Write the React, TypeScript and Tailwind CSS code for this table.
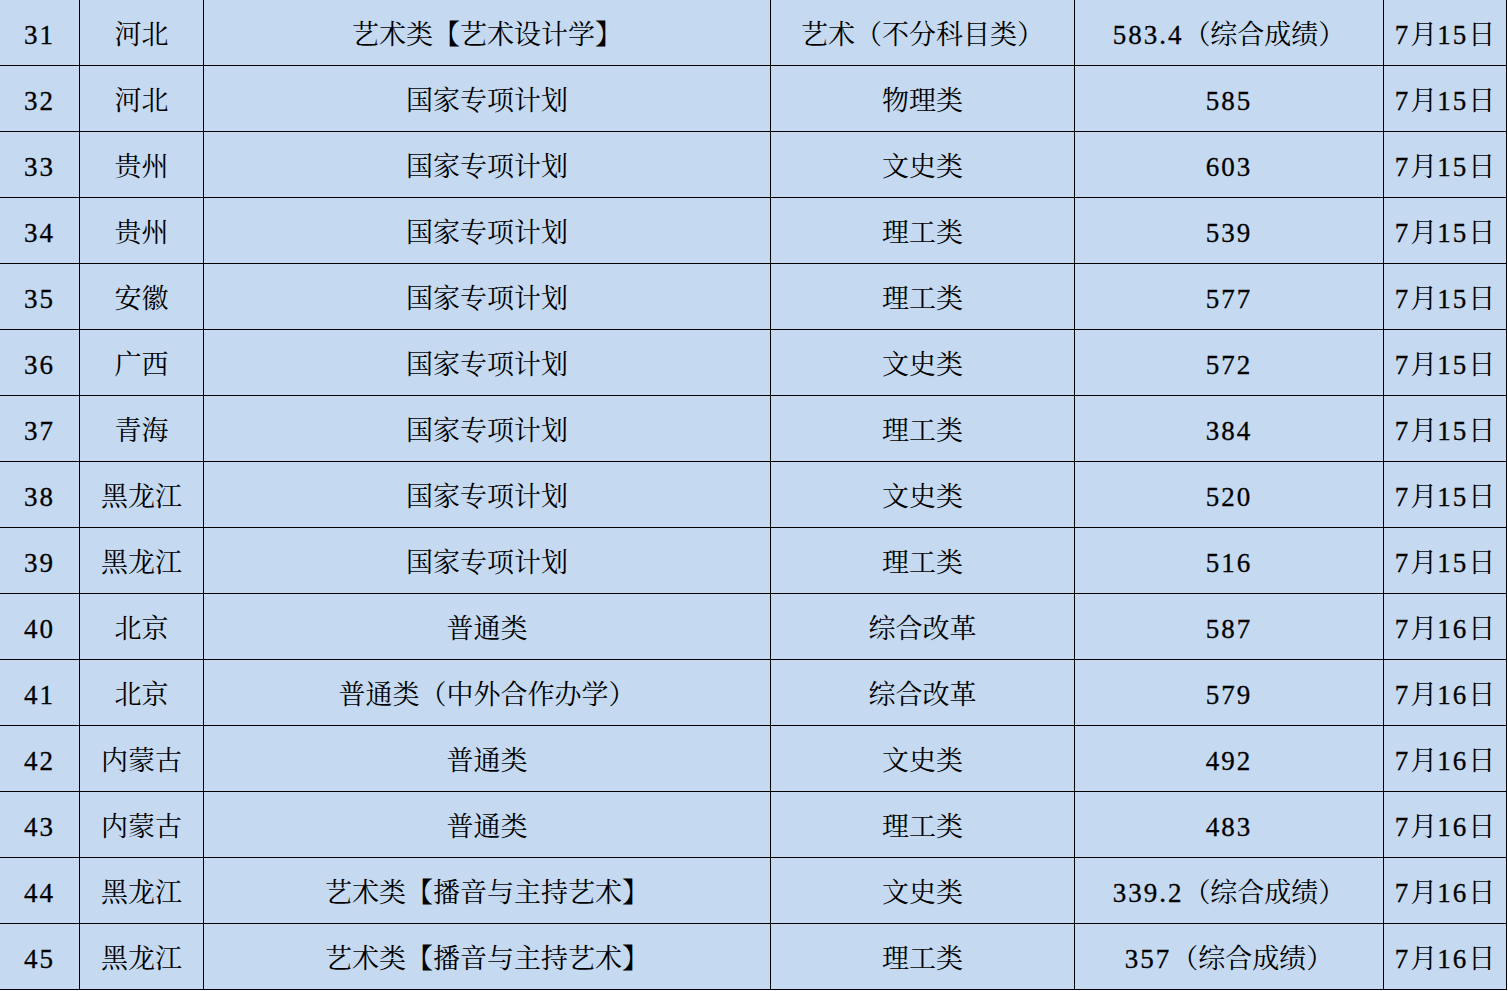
const rows: [string, string, string, string, string, string][] = [
  ["31", "河北", "艺术类【艺术设计学】", "艺术（不分科目类）", "583.4（综合成绩）", "7月15日"],
  ["32", "河北", "国家专项计划", "物理类", "585", "7月15日"],
  ["33", "贵州", "国家专项计划", "文史类", "603", "7月15日"],
  ["34", "贵州", "国家专项计划", "理工类", "539", "7月15日"],
  ["35", "安徽", "国家专项计划", "理工类", "577", "7月15日"],
  ["36", "广西", "国家专项计划", "文史类", "572", "7月15日"],
  ["37", "青海", "国家专项计划", "理工类", "384", "7月15日"],
  ["38", "黑龙江", "国家专项计划", "文史类", "520", "7月15日"],
  ["39", "黑龙江", "国家专项计划", "理工类", "516", "7月15日"],
  ["40", "北京", "普通类", "综合改革", "587", "7月16日"],
  ["41", "北京", "普通类（中外合作办学）", "综合改革", "579", "7月16日"],
  ["42", "内蒙古", "普通类", "文史类", "492", "7月16日"],
  ["43", "内蒙古", "普通类", "理工类", "483", "7月16日"],
  ["44", "黑龙江", "艺术类【播音与主持艺术】", "文史类", "339.2（综合成绩）", "7月16日"],
  ["45", "黑龙江", "艺术类【播音与主持艺术】", "理工类", "357（综合成绩）", "7月16日"],
];

const widths = ["w-[80px]", "w-[124px]", "w-[567px]", "w-[304px]", "w-[309px]", "w-[123px]"];

function Text({ value }: { value: string }) {
  // digits get a little extra spacing, like the half-width glyphs of the sheet font
  const parts = value.split(/([0-9.]+)/).filter((p) => p.length > 0);
  return (
    <span className="whitespace-nowrap">
      {parts.map((p, i) =>
        /^[0-9.]+$/.test(p) ? (
          <span
            key={i}
            className="font-['Liberation_Serif',serif] tracking-[2px] [-webkit-text-stroke:0.3px_#000]"
          >
            {p}
          </span>
        ) : (
          <span key={i}>{p}</span>
        ),
      )}
    </span>
  );
}

export default function App() {
  return (
    <div
      className="min-h-[991px] w-[1508px] bg-white text-[27px] text-black"
      style={{ fontFamily: '"Liberation Serif", "Noto Serif CJK SC", "Noto Sans CJK SC", serif' }}
    >
      <div className="flex w-[1507px] flex-col bg-[#c5d9f1]">
        {rows.map((row) => (
          <div key={row[0]} className="flex h-[66px]">
            {row.map((cell, i) => (
              <div
                key={i}
                className={`${widths[i]} flex shrink-0 items-center justify-center border-r border-b border-black pt-[5px]`}
              >
                <Text value={cell} />
              </div>
            ))}
          </div>
        ))}
      </div>
    </div>
  );
}
